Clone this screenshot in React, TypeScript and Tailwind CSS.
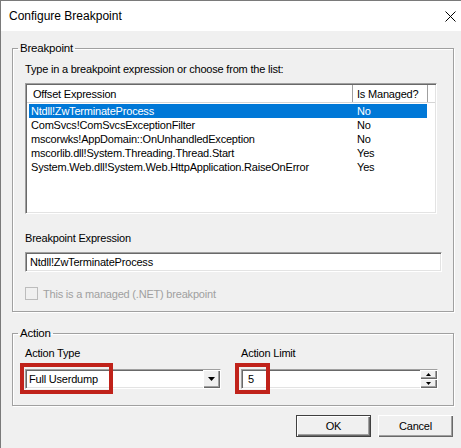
import React from "react";

const rows = [
  { expr: "Ntdll!ZwTerminateProcess", managed: "No" },
  { expr: "ComSvcs!ComSvcsExceptionFilter", managed: "No" },
  { expr: "mscorwks!AppDomain::OnUnhandledException", managed: "No" },
  { expr: "mscorlib.dll!System.Threading.Thread.Start", managed: "Yes" },
  { expr: "System.Web.dll!System.Web.HttpApplication.RaiseOnError", managed: "Yes" },
];

// sunken 3D edge used by the list, text box, combo and spin box
const sunken =
  "border border-t-[#a0a0a0] border-l-[#a0a0a0] border-b-white border-r-white shadow-[inset_1px_1px_0_#696969,inset_-1px_-1px_0_#e3e3e3]";

const raised =
  "bg-[#f0f0f0] shadow-[inset_1px_1px_0_#ffffff,inset_-1px_-1px_0_#696969,inset_-2px_-2px_0_#a0a0a0]";

function GroupBox({ title, className, children }: { title: string; className?: string; children: React.ReactNode }) {
  return (
    <fieldset
      className={`ml-[11px] w-[442px] border border-[#a0a0a0] shadow-[inset_1px_1px_0_#fff,1px_1px_0_#fff] ${className ?? ""}`}
    >
      <legend className="ml-[5px] px-[2px] text-[11.5px] leading-[14px] text-black">{title}</legend>
      <div className="pl-[12px]">{children}</div>
    </fieldset>
  );
}

function Arrow({ up, small }: { up?: boolean; small?: boolean }) {
  const w = small ? 5 : 7;
  const h = small ? 3 : 4;
  return (
    <svg width={w} height={h} viewBox={`0 0 ${w} ${h}`} className="block">
      {up ? (
        <path d={`M${w / 2} 0 L${w} ${h} L0 ${h} Z`} fill="#000" />
      ) : (
        <path d={`M0 0 L${w} 0 L${w / 2} ${h} Z`} fill="#000" />
      )}
    </svg>
  );
}

export default function App() {
  return (
    <div
      className="w-[461px] h-[448px] bg-[#f0f0f0] border-l border-t border-[#7a7a7a] text-black overflow-hidden text-[11px] tracking-[-0.2px]"
      style={{ fontFamily: '"Liberation Sans", Arial, sans-serif' }}
    >
      {/* Title bar */}
      <div className="h-[30px] bg-white flex items-center justify-between pl-[8px] pr-[5px]">
        <span className="text-[12px] leading-[14px] tracking-normal">Configure Breakpoint</span>
        <svg width="11" height="11" viewBox="0 0 11 11">
          <path d="M0.5 0.5 L10.5 10.5 M10.5 0.5 L0.5 10.5" stroke="#000" strokeWidth="1" />
        </svg>
      </div>

      <GroupBox title="Breakpoint" className="mt-[10px] pb-[11px]">
        <div className="mt-[7px] leading-[14px]">
          Type in a breakpoint expression or choose from the list:
        </div>

        {/* List view */}
        <div className={`mt-[7px] w-[412px] h-[131px] bg-white ${sunken} p-[1px]`}>
          <div className="flex h-[18px] border-b border-[#d5d5d5] bg-white">
            <div className="w-[326px] pl-[6px] flex items-center border-r border-[#a0a0a0] leading-[14px]">
              Offset Expression
            </div>
            <div className="w-[75px] pl-[4px] flex items-center border-r border-[#a0a0a0] leading-[14px]">
              Is Managed?
            </div>
            <div className="flex-1" />
          </div>
          <div className="pl-[2px] pt-[1px]">
            {rows.map((r, i) => (
              <div
                key={r.expr}
                className={`flex w-[398px] h-[14px] items-center leading-[14px] ${i === 0 ? "bg-[#0078d7] text-white" : ""}`}
              >
                <div className="w-[326px] pl-[2px] whitespace-nowrap">{r.expr}</div>
                <div className="pl-[2px]">{r.managed}</div>
              </div>
            ))}
          </div>
        </div>

        <div className="mt-[17px] leading-[14px]">Breakpoint Expression</div>
        <div className={`mt-[7px] w-[417px] h-[20px] bg-white ${sunken} flex items-center pl-[4px]`}>
          Ntdll!ZwTerminateProcess
        </div>

        <div className="mt-[15px] flex items-center h-[13px]">
          <div className="w-[13px] h-[13px] border border-[#bcbcbc] bg-[#f0f0f0]" />
          <span className="ml-[5px] leading-[14px] text-[#a0a0a0]">This is a managed (.NET) breakpoint</span>
        </div>
      </GroupBox>

      <GroupBox title="Action" className="mt-[14px] pb-[16px]">
        <div className="flex gap-[20px] mt-[6px]">
          <div className="w-[196px]">
            <div className="leading-[14px]">Action Type</div>
            <div className={`relative mt-[9px] h-[20px] bg-white ${sunken} flex items-center`}>
              <span className="pl-[3px] flex-1">Full Userdump</span>
              <div className={`w-[17px] h-[18px] ${raised} flex items-center justify-center`}>
                <Arrow />
              </div>
              <div className="absolute left-[-6px] top-[-7px] w-[93px] h-[31px] border-4 border-[#c0221a]" />
            </div>
          </div>
          <div className="w-[197px]">
            <div className="leading-[14px]">Action Limit</div>
            <div className={`relative mt-[9px] h-[20px] bg-white ${sunken} flex items-center`}>
              <span className="pl-[6px] flex-1">5</span>
              <div className="flex flex-col w-[17px] h-[18px]">
                <div className={`h-[9px] ${raised} flex items-center justify-center`}>
                  <Arrow up small />
                </div>
                <div className={`h-[9px] ${raised} flex items-center justify-center`}>
                  <Arrow small />
                </div>
              </div>
              <div className="absolute left-[-7px] top-[-7px] w-[35px] h-[31px] border-4 border-[#c0221a]" />
            </div>
          </div>
        </div>
      </GroupBox>

      {/* Buttons */}
      <div className="mt-[9px] flex justify-end gap-[7px] pr-[8px]">
        <button className="w-[75px] h-[22px] border border-[#404040] bg-[#f0f0f0] shadow-[inset_1px_1px_0_#fff,inset_-1px_-1px_0_#696969,inset_-2px_-2px_0_#a0a0a0]">
          OK
        </button>
        <button className={`w-[75px] h-[22px] ${raised}`}>Cancel</button>
      </div>
    </div>
  );
}
